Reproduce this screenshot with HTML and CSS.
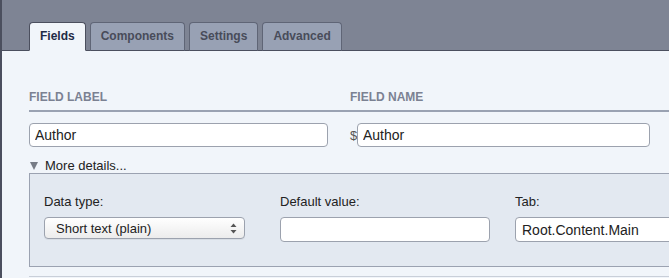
FILE: index.html
```html
<!DOCTYPE html>
<html lang="en">
<head>
  <meta charset="UTF-8">
  <meta name="viewport" content="width=device-width, initial-scale=1.0">
  <title>Edit field</title>
  <link rel="stylesheet" href="styles.css">
</head>
<body>
  <div class="editor">
    <div class="tabbar">
      <div class="tab active">Fields</div>
      <div class="tab">Components</div>
      <div class="tab">Settings</div>
      <div class="tab">Advanced</div>
    </div>

    <div class="content">
      <div class="field-row">
        <div class="field-col">
          <h4 class="col-title">FIELD LABEL</h4>
        </div>
        <div class="field-col">
          <h4 class="col-title">FIELD NAME</h4>
        </div>
      </div>
      <div class="rule"></div>

      <div class="field-row inputs">
        <div class="field-col">
          <input class="text-box label-box" type="text" value="Author">
        </div>
        <div class="field-col name-col">
          <span class="prefix">$</span>
          <input class="text-box name-box" type="text" value="Author">
        </div>
      </div>

      <div class="toggle">
        <span class="arrow"></span>More details...
      </div>

      <div class="details">
        <div class="detail-col">
          <label>Data type:</label>
          <div class="fake-select">
            <span>Short text (plain)</span>
            <svg width="7" height="11" viewBox="0 0 7 11">
              <path d="M3.5 0.5 L6.5 4 L0.5 4 Z" fill="#555"/>
              <path d="M3.5 10.5 L6.5 7 L0.5 7 Z" fill="#555"/>
            </svg>
          </div>
        </div>
        <div class="detail-col">
          <label>Default value:</label>
          <input class="text-box default-box" type="text" value="">
        </div>
        <div class="detail-col">
          <label>Tab:</label>
          <input class="text-box tab-box" type="text" value="Root.Content.Main">
        </div>
      </div>

      <div class="next-row"></div>
    </div>
  </div>
</body>
</html>
```

FILE: styles.css
```css
html, body {
  margin: 0;
  padding: 0;
  overflow: hidden;
}

body {
  font-family: "Liberation Sans", Arial, sans-serif;
  background: #f1f5fa;
  width: 669px;
  height: 278px;
}

.editor {
  border-left: 2px solid #4b4f5e;
  height: 278px;
  width: 900px;
  background: #f1f5fa;
}

.tabbar {
  height: 50px;
  background: #7e8494;
  border-bottom: 1px solid #4b4f5e;
  display: flex;
  align-items: flex-end;
  padding-left: 27px;
  gap: 4px;
}

.tab {
  height: 27px;
  line-height: 27px;
  padding: 0 10px;
  margin-bottom: -1px;
  background: #98a1b4;
  border: 1px solid #5f6576;
  border-bottom: 1px solid #4b4f5e;
  border-radius: 4px 4px 0 0;
  font-size: 12px;
  font-weight: bold;
  color: #484c5a;
}

.tab.active {
  background: #f1f5fa;
  border-color: #4b4f5e;
  border-bottom-color: #f1f5fa;
  color: #1f2b47;
}

.content {
  padding-left: 27px;
}

.field-row {
  display: flex;
  gap: 21px;
}

.field-col {
  width: 300px;
}

.col-title {
  margin: 0;
  padding-top: 39px;
  height: 20px;
  font-size: 12px;
  font-weight: bold;
  color: #7b8192;
  line-height: 14px;
}

.rule {
  height: 2px;
  background: #9aa2b2;
}

.inputs {
  margin-top: 11px;
}

.name-col {
  display: flex;
  align-items: center;
}

.prefix {
  font-size: 13px;
  color: #555;
  width: 7px;
}

.text-box {
  box-sizing: border-box;
  height: 24px;
  border: 1px solid #9ca2ae;
  border-radius: 4px;
  background: #fff;
  font-family: "Liberation Sans", Arial, sans-serif;
  font-size: 14px;
  color: #222;
  padding: 0 5px;
  margin: 0;
  outline: none;
}

.label-box {
  width: 299px;
}

.name-box {
  width: 298px;
}

.toggle {
  margin-top: 11px;
  height: 15px;
  font-size: 13px;
  line-height: 15px;
  color: #222;
  display: flex;
  align-items: center;
}

.arrow {
  width: 0;
  height: 0;
  border-left: 4px solid transparent;
  border-right: 4px solid transparent;
  border-top: 8px solid #777c86;
  margin: 0 7px 0 1px;
}

.details {
  margin-top: 0;
  height: 92px;
  background: #e3e9f1;
  border: 1px solid #9ba2b1;
  border-right: none;
  padding-left: 14px;
  display: grid;
  grid-template-columns: 236px 235px 300px;
}

.detail-col label {
  display: block;
  margin-top: 20px;
  height: 15px;
  font-size: 13px;
  line-height: 15px;
  color: #222;
}

.fake-select {
  box-sizing: border-box;
  margin-top: 8px;
  width: 201px;
  height: 22px;
  border: 1px solid #9ca2ae;
  border-radius: 4px;
  background: linear-gradient(#ffffff, #ececec);
  box-shadow: 0 1px 0 rgba(0, 0, 0, 0.05);
  display: flex;
  align-items: center;
  justify-content: space-between;
  padding: 0 7px 0 11px;
  font-size: 13px;
  color: #222;
}

.default-box {
  margin-top: 8px;
  width: 210px;
  height: 25px;
}

.tab-box {
  margin-top: 8px;
  width: 220px;
  height: 25px;
  padding-left: 6px;
}

.next-row {
  margin-top: 9px;
  height: 1px;
  background: #c9cfd9;
}
```
